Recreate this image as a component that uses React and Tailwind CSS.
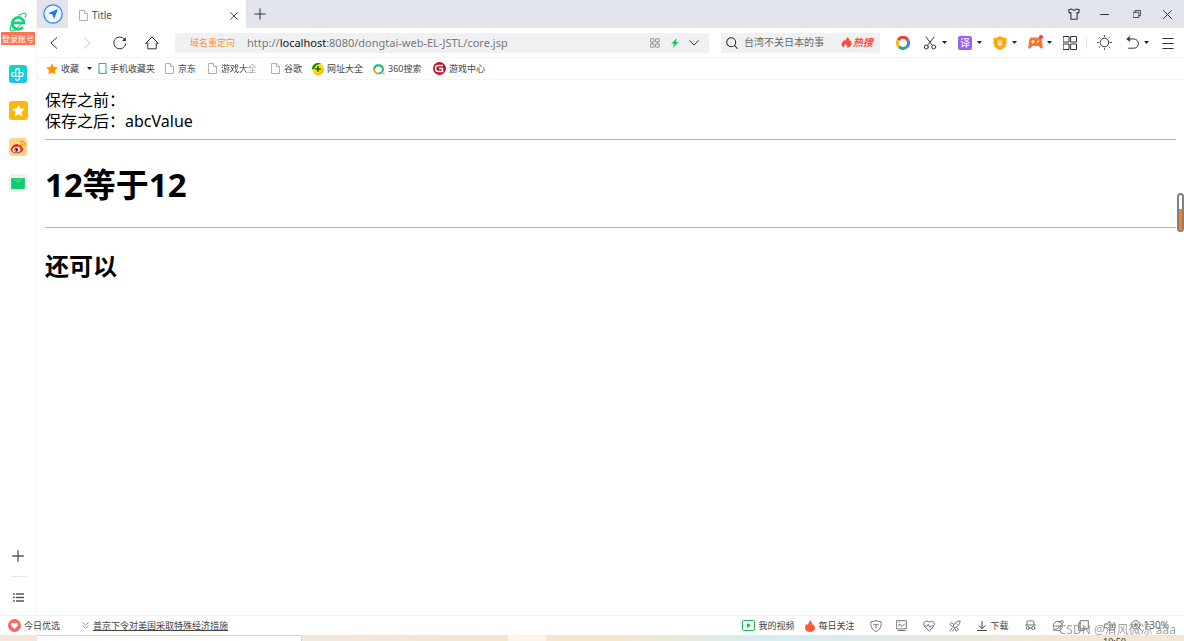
import React from "react";

function Icon({ size = "size-4", box = "0 0 16 16", sw = 1.1, children }) {
  return (
    <svg className={`${size} shrink-0`} viewBox={box} fill="none" stroke="currentColor" strokeWidth={sw} strokeLinecap="round" strokeLinejoin="round" aria-hidden="true">
      {children}
    </svg>
  );
}

function Caret() {
  return (
    <svg className="h-[3px] w-[5px] shrink-0" viewBox="0 0 5 3" aria-hidden="true">
      <path d="M0 0h5L2.500 3z" fill="#222" />
    </svg>
  );
}

function PageIcon() {
  return (
    <svg className="h-[11px] w-[9px] shrink-0" viewBox="0 0 9 11" fill="#fff" stroke="#b0b0b0" aria-hidden="true">
      <path d="M.5.5h5l3 3v7h-8z" />
      <path d="M5.500.5v3h3" />
    </svg>
  );
}

function IconButton({ label, className = "", children }) {
  return (
    <button type="button" aria-label={label} className={`flex h-6 shrink-0 items-center ${className}`}>
      {children}
    </button>
  );
}

function Sidebar() {
  return (
    <aside className="flex w-[37px] shrink-0 flex-col items-center border-r border-[#f4f4f4] bg-white pt-3">
      <button type="button" className="flex w-full flex-col items-center" aria-label="登录账号">
        <svg className="h-5 w-[18px]" viewBox="0 0 18 20" fill="none" aria-hidden="true">
          <path d="M3.200 10.800h11.900A6 6 0 1 0 14 15" stroke="#16d178" strokeWidth="2.700" />
          <path d="M2.500 12C.6 17 .8 19.500 3.300 19 6 18.400 9.500 15.500 12 12" stroke="#16d178" strokeWidth="1.100" />
          <path d="M9.500 3.800C13.500.8 17 .3 17 2.700c0 1-.5 2-1.200 3" stroke="#16d178" strokeWidth="1.200" />
        </svg>
        <span className="h-[13px] w-[34px] bg-[#ff7350] text-center text-[8px] leading-[13px] whitespace-nowrap text-white">登录账号</span>
      </button>
      <nav className="mt-5 flex flex-col gap-[18px]" aria-label="侧边栏">
        <button type="button" aria-label="健康" className="flex size-[18px] items-center justify-center rounded-[3px] bg-linear-to-b from-[#10d9bb] to-[#25bff2]">
          <svg className="size-[15px]" viewBox="0 0 15 15" fill="none" stroke="#fff" strokeWidth="1.200" aria-hidden="true">
            <path d="M5.700 9V3.500a1.800 1.800 0 0 1 3.600 0v8a1.800 1.800 0 0 1-3.600 0" />
            <path d="M8.300 5.700h3.200a1.800 1.800 0 0 1 0 3.600h-8a1.800 1.800 0 0 1 0-3.600h.9" />
          </svg>
        </button>
        <button type="button" aria-label="收藏夹" className="flex size-[19px] items-center justify-center rounded-[3px] bg-[#ffb70a]">
          <svg className="size-[13px]" viewBox="0 0 14 14" fill="#fff" aria-hidden="true">
            <path d="m7 .5 2 4.300 4.700.6-3.400 3.200.9 4.700L7 11l-4.200 2.300.9-4.700L.3 5.400 5 4.800z" />
          </svg>
        </button>
        <button type="button" aria-label="微博" className="flex size-[18px] items-center justify-center rounded-[3px] bg-[#fbd687]">
          <svg className="size-[16px]" viewBox="0 0 16 16" aria-hidden="true">
            <path d="M6.500 5C4 5 .8 8 .8 10.600c0 2.300 2.700 3.700 5.800 3.700 4 0 6.700-2.200 6.700-4.300 0-1.300-1-2-2-2.200.5-1.300 0-2.400-2.700-1.400C8.800 5.400 7.800 4.900 6.500 5z" fill="#e6321f" />
            <ellipse cx="6.500" cy="10.600" rx="4" ry="2.700" fill="#fff" transform="rotate(-8 6.500 10.600)" />
            <circle cx="6.200" cy="10.800" r="1.900" fill="#191919" />
            <circle cx="5.500" cy="11.200" r=".6" fill="#fff" />
            <path d="M10.500 4.800c1.600-.3 2.700.8 2.300 2.300M10 2.300c3.300-.7 5.700 1.800 5 5" fill="none" stroke="#f29a1c" strokeWidth="1.200" />
          </svg>
        </button>
        <button type="button" aria-label="邮件" className="flex size-[18px] items-center justify-center rounded-[4px] bg-[#f0f0f0]">
          <svg className="h-[11px] w-[14px]" viewBox="0 0 15 12" aria-hidden="true">
            <rect width="15" height="12" rx="1" fill="#13cb70" />
            <path d="M0 .5h15L7.500 7z" fill="#32d585" />
            <path d="m0 .8 7.500 6.300L15 .8" fill="none" stroke="#12a45c" strokeWidth=".7" />
          </svg>
        </button>
      </nav>
      <div className="mt-auto flex flex-col items-center pb-[6px] text-[#555]">
        <IconButton label="添加" className="justify-center">
          <Icon size="size-[12px]" box="0 0 12 12" sw={1.3}><path d="M6 .7v10.600M.7 6h10.600" /></Icon>
        </IconButton>
        <div className="my-[8px] h-px w-[17px] bg-[#e8e8e8]" />
        <IconButton label="列表" className="justify-center">
          <svg className="h-[9px] w-[11px]" viewBox="0 0 11 9" fill="#555" aria-hidden="true">
            <path d="M0 .2h1.800v1.500H0zM3 .2h8v1.500H3zM0 3.700h1.800v1.500H0zM3 3.700h8v1.500H3zM0 7.200h1.800v1.500H0zM3 7.200h8v1.500H3z" />
          </svg>
        </IconButton>
      </div>
    </aside>
  );
}

function TabBar() {
  return (
    <header className="flex h-7 items-stretch bg-[#e1e4ea] text-[#333]">
      <button type="button" aria-label="导航" className="flex w-[31px] items-center justify-center">
        <svg className="size-[20px]" viewBox="0 0 20 20" aria-hidden="true">
          <circle cx="10" cy="10" r="9.200" fill="#f2f7ff" stroke="#2f86f6" strokeWidth="1.200" />
          <path d="m15 5-9.800 4.200 4.300 1.400 1.500 4.400z" fill="#1677ff" />
        </svg>
      </button>
      <div className="flex w-[178px] items-center bg-white pr-[7px] pl-[11px] pt-[3px]">
        <PageIcon />
        <span className="ml-[4px] text-[10px] text-[#555]">Title</span>
        <IconButton label="关闭标签" className="ml-auto w-[10px] justify-center">
          <Icon size="size-[8px]" box="0 0 8 8" sw={0.9}><path d="m.7.7 6.600 6.600M7.300.7.7 7.300" /></Icon>
        </IconButton>
      </div>
      <button type="button" aria-label="新标签" className="flex w-7 items-center justify-center">
        <Icon size="size-[12px]" box="0 0 12 12" sw={1}><path d="M6 .8v10.400M.8 6h10.400" /></Icon>
      </button>
      <div className="ml-auto flex items-center pr-[2px]">
        <IconButton label="皮肤" className="w-[31px] justify-center">
          <Icon size="size-[12px]" box="0 0 12 12"><path d="M3.700 1C4.500 2.500 7.500 2.500 8.300 1l3 .8-.6 3.200-1.600-.5v6.700H2.900V4.500L1.300 5 .7 1.800z" /></Icon>
        </IconButton>
        <IconButton label="最小化" className="w-[31px] justify-center">
          <Icon size="size-[9px]" box="0 0 9 9" sw={1}><path d="M.5 4.500h8" /></Icon>
        </IconButton>
        <IconButton label="还原" className="w-[33px] justify-center">
          <Icon size="size-[8px]" box="0 0 9 9" sw={1}><path d="M.5 2.500h6v6h-6zM2.500 2.500v-2h6v6h-2" /></Icon>
        </IconButton>
        <IconButton label="关闭" className="w-[29px] justify-center">
          <Icon size="size-[9px]" box="0 0 9 9" sw={1}><path d="m.6.6 7.800 7.800M8.400.6.6 8.400" /></Icon>
        </IconButton>
      </div>
    </header>
  );
}

function Toolbar() {
  return (
    <div className="flex h-[30px] items-center border-b border-[#f4f4f4] pr-[10px] text-[#333]">
      <div className="flex w-[138px] shrink-0 pl-px">
        <IconButton label="后退" className="w-8 justify-center"><Icon size="h-[12px] w-[8px]" box="0 0 8 12" sw={1}><path d="M6.700.7 1 6l5.700 5.300" /></Icon></IconButton>
        <IconButton label="前进" className="w-[33px] justify-center text-[#c4c4c4]"><Icon size="h-[12px] w-[8px]" box="0 0 8 12" sw={1}><path d="M1.300.7 7 6l-5.700 5.300" /></Icon></IconButton>
        <IconButton label="刷新" className="w-[33px] justify-center"><Icon size="size-[14px]" box="0 0 14 14" sw={1}><path d="M12.700 8A6 6 0 1 1 11.300 2.900" /><path d="M12.800 1v4H9z" fill="currentColor" stroke="none" /></Icon></IconButton>
        <IconButton label="主页" className="w-8 justify-center"><Icon size="size-[14px]" box="0 0 14 14" sw={1}><path d="M.8 7.300 7 1l6.200 6.300h-2v5.500H2.800V7.300z" /></Icon></IconButton>
      </div>
      <div className="flex h-[20px] min-w-0 flex-1 items-center rounded-[1px] bg-[#eff1f3] pr-[10px] pl-[15px]">
        <span className="w-[57px] shrink-0 text-[9px] whitespace-nowrap text-[#ff9130]">域名重定向</span>
        <div role="textbox" aria-label="地址" contentEditable suppressContentEditableWarning className="min-w-0 flex-1 overflow-hidden text-[11px] leading-[18px] whitespace-nowrap text-[#777] outline-none">
          http://<span className="text-[#111]">localhost</span>:8080/dongtai-web-EL-JSTL/core.jsp
        </div>
        <IconButton label="二维码" className="mr-[11px] text-[#999]">
          <Icon size="size-[10px]" box="0 0 10 10" sw={1}><path d="M.8.8h3.200v3.200H.8zM6 .8h3.200v3.200H6zM.8 6h3.200v3.200H.8zM6 6h3.200v3.200H6zM2.400 4v2M7.600 4v2" /></Icon>
        </IconButton>
        <IconButton label="极速模式" className="mr-[10px]">
          <svg className="h-[10px] w-[8px]" viewBox="0 0 8 10" aria-hidden="true"><path d="M5.800 0 .2 5.800h2.900L1.900 10l5.900-6H4.900z" fill="#12ce66" /></svg>
        </IconButton>
        <IconButton label="展开"><Icon size="h-[6px] w-[10px]" box="0 0 10 6" sw={1}><path d="M.6.8 5 5 9.400.8" /></Icon></IconButton>
      </div>
      <div className="ml-3 flex h-[20px] w-[159px] shrink-0 items-center rounded-[1px] bg-[#eff1f3] pr-[6px] pl-[5px]">
        <Icon size="size-[12px]" box="0 0 12 12" sw={1.1}><circle cx="5.200" cy="5.200" r="4.500" /><path d="m8.600 8.600 2.600 2.700" /></Icon>
        <input aria-label="搜索" placeholder="台湾不关日本的事" className="ml-[6px] w-[97px] bg-transparent text-[10px] text-[#333] outline-none placeholder:text-[#666]" />
        <a href="#hot" className="flex items-center gap-px text-[10px] font-bold whitespace-nowrap text-[#ff4a3c] italic">
          <svg className="h-[11px] w-[11px]" viewBox="0 0 12 12" aria-hidden="true"><path d="M6.500 0c.3 2-1.200 2.500-2.200 4.500L3.500 3.200C.5 6-1 9.500 3 11.800c-.2-2 .8-3 2.500-4.300.2 1.500 1.700 2 1.300 4.300C11.500 10.500 13 7 10 3.500L9.200 5C9.500 3 8.800 1 6.500 0z" fill="#ff4a3c" /></svg>
          热搜
        </a>
      </div>
      <div className="ml-4 flex shrink-0 items-center">
        <IconButton label="浏览助手" className="w-[27px]">
          <svg className="size-[14px]" viewBox="0 0 14 14" fill="none" strokeWidth="3.200" aria-hidden="true">
            <path d="M2.200 4.200A5.400 5.400 0 0 1 11.800 4.200" stroke="#e8452f" />
            <path d="M11.800 4.200A5.400 5.400 0 0 1 10 11.500" stroke="#3d86ea" />
            <path d="M10 11.500A5.400 5.400 0 0 1 3 10.600" stroke="#2fae5a" />
            <path d="M3 10.600A5.400 5.400 0 0 1 2.200 4.200" stroke="#f5bc20" />
          </svg>
        </IconButton>
        <IconButton label="截图" className="w-[35px] gap-[5px]">
          <Icon size="size-[14px]" box="0 0 14 14" sw={1}><circle cx="3.300" cy="11" r="2" /><circle cx="10.700" cy="11" r="2" /><path d="m3 1 6.500 8.500M11 1 4.500 9.500" /></Icon><Caret />
        </IconButton>
        <button type="button" aria-label="翻译" className="flex h-6 w-[35px] items-center gap-[5px]">
          <span className="flex size-[14px] items-center justify-center rounded-[2px] bg-[#9a63f7] text-[10px] leading-none text-white">译</span><Caret />
        </button>
        <IconButton label="钱盾" className="w-[35px] gap-[5px]">
          <svg className="size-[14px]" viewBox="0 0 14 14" fill="none" aria-hidden="true"><path d="M7 0c2 1.300 4 1.800 6.500 1.800V7.500c0 3-3 5.300-6.500 6.500C3.500 12.800.5 10.500.5 7.500V1.800C3 1.800 5 1.300 7 0z" fill="#ffa70b" /><path d="m4.800 3.800 2.200 2.700 2.200-2.700M7 6.500v4M4.600 6.900h4.800M4.600 8.600h4.800" stroke="#fff" strokeWidth=".9" /></svg><Caret />
        </IconButton>
        <IconButton label="游戏" className="w-[35px] gap-[4px]">
          <svg className="size-[15px]" viewBox="0 0 15 15" fill="none" aria-hidden="true"><path d="M3.300 2.500h8.200c1.500 0 2 1.500 2.500 4l.7 5.500c.2 2-1.700 2.200-2.700.8L10.700 11H4.300L3 12.800C2 14.200 0 14 .3 12L1 6.500c.4-2.500.8-4 2.300-4z" fill="#ff7430" /><path d="M3.300 6.700h3.400M5 5v3.400M9 7.600l2-2" stroke="#fff" strokeWidth="1.200" /><circle cx="13" cy="2" r="2" fill="#ff3342" /></svg><Caret />
        </IconButton>
        <IconButton label="扩展" className="w-[23px]">
          <Icon size="size-[14px]" box="0 0 14 14" sw={1}><path d="M.5.5h5.500v5.500H.5zM8 .5h5.500v5.500H8zM.5 8h5.500v5.500H.5zM8 8h5.500v5.500H8z" /></Icon>
        </IconButton>
        <div className="mr-[10px] h-3 w-px bg-[#ddd]" />
        <IconButton label="夜间模式" className="w-[29px]">
          <Icon size="size-[15px]" box="0 0 15 15" sw={1}><circle cx="7.500" cy="7.500" r="4.300" /><path d="M7.500.6v.7M7.500 13.700v.7M.6 7.500h.7M13.700 7.500h.7M2.600 2.600l.5.5M11.900 11.900l.5.5M2.600 12.400l.5-.5M11.900 3.100l.5-.5" /></Icon>
        </IconButton>
        <IconButton label="撤销" className="w-[36px] gap-[5px]">
          <Icon size="size-[13px]" box="0 0 13 13" sw={1}><path d="M2 3h5.800a4.600 4.600 0 0 1 0 9.200H2.500" /><path d="M3.500.6.6 3l2.900 2.400z" fill="currentColor" strokeWidth=".5" /></Icon><Caret />
        </IconButton>
        <IconButton label="菜单"><Icon size="size-[12px]" box="0 0 12 12" sw={1}><path d="M.8 1.500h10.400M.8 6.500h10.400M.8 11.500h10.400" /></Icon></IconButton>
      </div>
    </div>
  );
}

function Bookmarks() {
  const link = "flex shrink-0 items-center whitespace-nowrap";
  return (
    <nav aria-label="书签" className="flex h-[22px] items-center border-b border-[#f4f4f4] pl-[9px] text-[9px] text-[#444]">
      <a href="#fav" className={`${link} w-[52px] gap-[3px]`}>
        <svg className="size-[12px]" viewBox="0 0 14 14" fill="#ff9500" aria-hidden="true"><path d="m7 .2 2.100 4.400 4.800.6-3.500 3.300.9 4.900L7 11l-4.300 2.400.9-4.900L.1 5.200l4.800-.6z" /></svg>
        收藏<span className="ml-[5px]"><Caret /></span>
      </a>
      <a href="#mobile" className={`${link} w-[67px] gap-[3px]`}>
        <svg className="h-[11px] w-[9px]" viewBox="0 0 9 11" fill="none" stroke="#2dbd62" aria-hidden="true"><path d="M1 .5h7v10H1zM0 9h2M7 9h2" /></svg>
        手机收藏夹
      </a>
      <a href="#jd" className={`${link} w-[43px] gap-[4px]`}><PageIcon />京东</a>
      <a href="#games" className={`${link} w-[63px] gap-[4px]`}><PageIcon /><span className="bg-linear-to-r from-[#444] from-60% to-[#ccc] bg-clip-text text-transparent">游戏大全</span></a>
      <a href="#google" className={`${link} w-[41px] gap-[4px]`}><PageIcon />谷歌</a>
      <a href="#sites" className={`${link} w-[61px] gap-[3px]`}>
        <svg className="size-[12px]" viewBox="0 0 12 12" aria-hidden="true"><circle cx="6" cy="6" r="6" fill="#ffdb0a" /><path d="M0 6a6 6 0 0 1 9.500-4.900C6 .8 3 2.500 2.300 6z" fill="#168a1a" /><path d="M12 6a6 6 0 0 1-9.500 4.900C6 11.200 9 9.500 9.700 6z" fill="#f5c400" /><path d="M6 3.200v5.600M3.200 6h5.600" stroke="#0c6415" strokeWidth="1.700" /></svg>
        网址大全
      </a>
      <a href="#so" className={`${link} w-[60px] gap-[3px]`}>
        <svg className="size-[12px]" viewBox="0 0 12 12" fill="none" strokeWidth="2" aria-hidden="true"><path d="M1.100 6A4.500 4.500 0 0 1 10 6" stroke="#11b96b" /><path d="M10 6a4.500 4.500 0 0 1-4.400 4.500" stroke="#1fb6a0" /><path d="M5.600 10.500A4.500 4.500 0 0 1 1.100 6" stroke="#ff9a26" /><circle cx="10.800" cy="10.500" r="1" fill="#ff9a26" /></svg>
        360搜索
      </a>
      <a href="#play" className={`${link} gap-[3px]`}>
        <svg className="size-[13px]" viewBox="0 0 13 13" fill="none" aria-hidden="true"><circle cx="6.500" cy="6.500" r="6.500" fill="#b81425" /><path d="M10 3.500H5.500a3 3 0 0 0 0 6h4v-3H6" stroke="#fff" strokeWidth="1.500" /></svg>
        游戏中心
      </a>
    </nav>
  );
}

function PageContent() {
  return (
    <main className="relative flex-1 pr-2 pl-2 text-black">
      <div className="pt-[10px] text-[16px] leading-[21px]">
        <p>保存之前：</p>
        <p>保存之后：abcValue</p>
      </div>
      <hr className="mt-[7px] border-t border-[#b4b4b4]" />
      <h1 className="mt-6 text-[33px] leading-[42px] font-bold">12等于12</h1>
      <hr className="mt-[21px] border-t border-[#b4b4b4]" />
      <h2 className="mt-[22px] text-[24px] leading-[32px] font-bold">还可以</h2>
      <div className="absolute top-[113px] right-0 flex h-[39px] w-[7px] flex-col justify-end rounded-full border-2 border-[#808080] bg-white">
        <div className="h-[21px] rounded-b-full bg-[#ff7a1a]" />
      </div>
    </main>
  );
}

function StatusBar() {
  return (
    <footer className="relative flex h-5 shrink-0 items-center border-t border-[#f0f0f0] pr-[15px] pl-2 text-[9px] whitespace-nowrap text-[#444]">
      <a href="#today" className="flex items-center gap-[3px]">
        <svg className="size-[13px]" viewBox="0 0 13 13" aria-hidden="true"><circle cx="6.500" cy="6.500" r="6.500" fill="#fb665e" /><path d="M6.500 10 3.300 6.800a1.800 1.800 0 0 1 3.200-2.200 1.800 1.800 0 0 1 3.200 2.200z" fill="#fff" /></svg>
        今日优选
      </a>
      <a href="#news" className="ml-[22px] flex items-center gap-1">
        <svg className="size-[7px]" viewBox="0 0 7 7" fill="none" stroke="#999" aria-hidden="true"><path d="m.5.5 3 2.500 3-2.500M.5 3.700l3 2.500 3-2.500" /></svg>
        <span className="underline underline-offset-1">普京下令对美国采取特殊经济措施</span>
      </a>
      <div className="ml-auto flex items-center text-[#666]">
        <a href="#video" className="mr-[10px] flex items-center gap-[3px] text-[#444]">
          <svg className="h-[11px] w-[13px]" viewBox="0 0 13 11" aria-hidden="true"><rect x=".5" y=".5" width="12" height="10" rx="1" fill="#fff" stroke="#19b955" /><path d="m5 3 4 2.500L5 8z" fill="#19b955" /></svg>
          我的视频
        </a>
        <a href="#daily" className="mr-[15px] flex items-center gap-1 text-[#444]">
          <svg className="h-[12px] w-[10px]" viewBox="0 0 10 12" aria-hidden="true"><path d="M4.500 0c.5 2.500-1.500 3-2 5L1.500 4C-.5 7-1 11 4 12h2c5-1 4.500-5 2.500-8l-1 1.500C7.500 3 6.500 1 4.500 0z" fill="#fb5d3c" /></svg>
          每日关注
        </a>
        <IconButton label="安全" className="w-[26px]"><Icon size="size-[12px]" box="0 0 12 12" sw={0.9}><path d="M6 .6c1.500.8 3 1.200 5.200 1.300C11.200 7 10 9.800 6 11.500 2 9.800.8 7 .8 1.900 3 1.800 4.500 1.400 6 .6zM3.500 5c1-1.200 2-.8 2.500 0 .5-.8 1.500-1.200 2.500 0M6 4.800V8" /></Icon></IconButton>
        <IconButton label="图片" className="w-[27px]"><Icon size="size-[11px]" box="0 0 11 11" sw={0.9}><path d="M.7.700h9.600v8.200H.7zM2.500 6l1.300-2L6 6.500 8.500 4M2 10.500h7M3 2.500h.2" /></Icon></IconButton>
        <IconButton label="健康检查" className="w-[26px]"><Icon size="size-[12px]" box="0 0 12 12" sw={0.9}><path d="M6 11 1.300 6.200A2.900 2.900 0 0 1 6 2.300a2.900 2.900 0 0 1 4.700 3.900zM2 6h2.300l1-1.800 1.400 3L7.700 6H10" /></Icon></IconButton>
        <IconButton label="加速" className="w-[28px]"><Icon size="size-[12px]" box="0 0 12 12" sw={0.9}><path d="M4 6.500C5 3.500 7.500 1 11.200.8 11 4.500 8.500 7 5.500 8zM4.500 4.500 2.500 2.500.8 4.500 3.500 6.500M7.500 7.500 9.500 9.500l-2 1.700L5.500 8M3 8l-2 3M5 9.500 3 11.300M7.500 3.700l.8.800" /></Icon></IconButton>
        <button type="button" className="flex w-[48px] items-center gap-[4px] text-[#444]"><Icon size="size-[10px]" box="0 0 10 10" sw={1}><path d="M5 .5v7M1.800 4.500 5 7.700l3.200-3.200M.5 9.500h9" /></Icon>下载</button>
        <IconButton label="无痕" className="w-[27px]"><Icon size="size-[11px]" box="0 0 11 11" sw={0.9}><path d="M2 5V1.500C2 .5 9 .5 9 1.500V5M.6 5h9.800M4.300 8h2.400" /><circle cx="2.700" cy="8" r="1.600" /><circle cx="8.300" cy="8" r="1.600" /></Icon></IconButton>
        <IconButton label="浏览模式" className="w-[26px]"><Icon size="size-[12px]" box="0 0 12 12" sw={0.9}><path d="M10.500 7.500A4.700 4.700 0 1 1 10.300 4M1.500 9.500C-.5 13 9 7 11 2.500 12 0 9 .5 7 2M3 6h7.500" /></Icon></IconButton>
        <IconButton label="分屏" className="w-[26px]"><Icon size="size-[11px]" box="0 0 11 11" sw={0.9}><path d="M2.500.7h7.800v8H2.500zM2.500 3H.7v7.500h5.500V8.700" /></Icon></IconButton>
        <IconButton label="声音" className="w-[27px]"><Icon size="size-[12px]" box="0 0 12 12" sw={0.9}><path d="M.7 4h2L6 1.200v9.600L2.700 8h-2zM8 4c1 1.200 1 2.800 0 4M9.800 2.300c2 2.300 2 5.100 0 7.400" /></Icon></IconButton>
        <button type="button" className="flex items-center gap-[2px] text-[10px]"><Icon size="size-[11px]" box="0 0 11 11" sw={0.9}><circle cx="4.800" cy="4.800" r="4.200" /><path d="m8 8 2.400 2.400M2.800 4.800h4M4.800 2.800v4" /></Icon>130%</button>
      </div>
      <span className="pointer-events-none absolute top-[6px] right-[8px] text-[12px] leading-4 text-[#8c8c8c] opacity-80">CSDN @清风微凉 aaa</span>
    </footer>
  );
}

function DesktopStrip() {
  return (
    <div className="flex h-[6px] shrink-0 overflow-hidden bg-[#f3e8d8]">
      <div className="w-[37px] shrink-0" />
      <div className="w-[265px] shrink-0 border-t border-r border-[#d4d4d4] bg-white" />
      <div className="w-[206px] shrink-0 bg-linear-to-r from-[#f2e8df] to-[#f4e6cc]" />
      <div className="w-[38px] shrink-0 bg-[#fbf5e8]" />
      <div className="flex flex-1 justify-end bg-linear-to-r from-[#f5e7cc] from-10% via-[#d5edf2] via-35% to-[#f3e7d3] to-80% pr-[58px] text-[9px] leading-[14px] text-[#333]">10:50</div>
    </div>
  );
}

export default function App() {
  return (
    <div className="flex min-h-screen flex-col overflow-hidden bg-white font-['Noto_Sans','Noto_Sans_CJK_SC',sans-serif]" lang="zh-CN">
      <div className="flex flex-1">
        <Sidebar />
        <div className="flex min-w-0 flex-1 flex-col">
          <TabBar />
          <Toolbar />
          <Bookmarks />
          <PageContent />
        </div>
      </div>
      <StatusBar />
      <DesktopStrip />
    </div>
  );
}
